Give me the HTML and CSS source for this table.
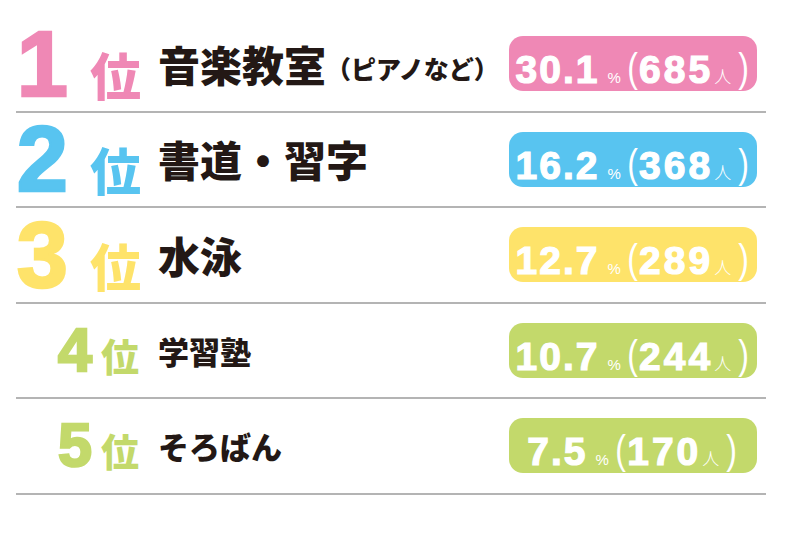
FILE: index.html
```html
<!DOCTYPE html>
<html lang="ja">
<head>
<meta charset="utf-8">
<link rel="stylesheet" href="styles.css">
</head>
<body>
<ul class="ranking">
  <li class="row big pink">
    <div class="rank"><span class="num">1</span><span class="i">位</span></div>
    <div class="label">音楽教室<span class="sub">（ピアノなど）</span></div>
    <div class="badge"><span class="pct">30.1</span><span class="u">%</span><span class="p">(</span><span class="cnt">685</span><span class="u2">人</span><span class="p">)</span></div>
  </li>
  <li class="row big blue">
    <div class="rank"><span class="num">2</span><span class="i">位</span></div>
    <div class="label">書道・習字</div>
    <div class="badge"><span class="pct">16.2</span><span class="u">%</span><span class="p">(</span><span class="cnt">368</span><span class="u2">人</span><span class="p">)</span></div>
  </li>
  <li class="row big yellow">
    <div class="rank"><span class="num">3</span><span class="i">位</span></div>
    <div class="label">水泳</div>
    <div class="badge"><span class="pct">12.7</span><span class="u">%</span><span class="p">(</span><span class="cnt">289</span><span class="u2">人</span><span class="p">)</span></div>
  </li>
  <li class="row small green">
    <div class="rank"><span class="num">4</span><span class="i">位</span></div>
    <div class="label">学習塾</div>
    <div class="badge"><span class="pct">10.7</span><span class="u">%</span><span class="p">(</span><span class="cnt">244</span><span class="u2">人</span><span class="p">)</span></div>
  </li>
  <li class="row small green">
    <div class="rank"><span class="num">5</span><span class="i">位</span></div>
    <div class="label">そろばん</div>
    <div class="badge"><span class="pct">7.5</span><span class="u">%</span><span class="p">(</span><span class="cnt">170</span><span class="u2">人</span><span class="p">)</span></div>
  </li>
</ul>
</body>
</html>
```
FILE: styles.css
```css
html, body {
  margin: 0;
  padding: 0;
  background: #ffffff;
}
body {
  font-family: "Noto Sans CJK JP", "Liberation Sans", sans-serif;
  color: #231815;
}
.ranking {
  list-style: none;
  margin: 0 0 0 16px;
  padding: 17px 0 0 0;
  width: 750px;
}
.row {
  display: flex;
  align-items: center;
  height: 93.5px;
  border-bottom: 2px solid #b4b4b4;
}
.pink { --c: #ef88b5; }
.blue { --c: #58c4f0; }
.yellow { --c: #fee36a; }
.green { --c: #c3d96b; }

.rank {
  width: 142px;
  flex: none;
  display: flex;
  align-items: baseline;
  justify-content: flex-end;
  padding-right: 17px;
  box-sizing: border-box;
  color: var(--c);
}
.num {
  font-family: "Liberation Sans", Arial, sans-serif;
  font-weight: 700;
  -webkit-text-stroke: 2.5px var(--c);
  line-height: 1;
}
.i {
  font-family: "Noto Sans CJK JP", sans-serif;
  font-weight: 900;
  line-height: 1;
}
.big .num { font-size: 92px; margin-right: 22px; }
.big .i { font-size: 51px; }
.small .rank { padding-right: 19px; }
.small .num { font-size: 61px; margin-right: 9px; }
.small .i { font-size: 38px; }

.label {
  flex: 1;
  font-weight: 900;
  line-height: 1;
  white-space: nowrap;
}
.big .label { font-size: 42px; }
.small .label { font-size: 31px; }
.sub {
  font-size: 25px;
  vertical-align: 3px;
}

.badge {
  flex: none;
  width: 248px;
  height: 55px;
  margin-right: 9px;
  border-radius: 14px;
  background: var(--c);
  color: #ffffff;
  display: flex;
  align-items: baseline;
  justify-content: center;
  padding-top: 13px;
  box-sizing: border-box;
  font-family: "Liberation Sans", Arial, sans-serif;
  line-height: 1;
}
.pct, .cnt {
  font-size: 39px;
  font-weight: 700;
  letter-spacing: 2px;
  -webkit-text-stroke: 1.2px #ffffff;
}
.cnt { letter-spacing: 3px; }
.u {
  font-size: 15px;
  margin-left: 8px;
  margin-right: 5px;
}
.p {
  font-family: "Liberation Sans", Arial, sans-serif;
  font-weight: 400;
  font-size: 40px;
  transform: scaleX(0.8);
  position: relative;
  top: -1px;
}
.p:first-of-type { margin-right: 3px; }
.u2 {
  font-family: "Noto Sans CJK JP", sans-serif;
  font-weight: 300;
  font-size: 17px;
  margin-left: 1px;
  margin-right: 6px;
}
```
